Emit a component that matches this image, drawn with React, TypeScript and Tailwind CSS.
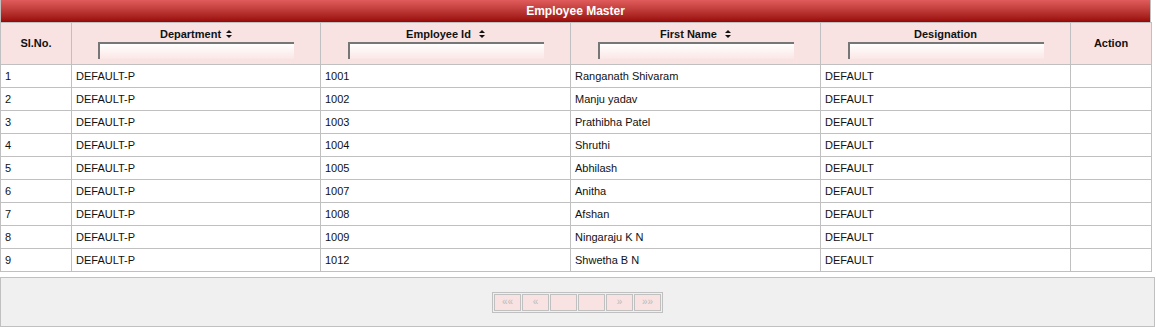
import React from 'react';

const rows = [
  { sl: 1, dept: 'DEFAULT-P', id: '1001', name: 'Ranganath Shivaram', desig: 'DEFAULT' },
  { sl: 2, dept: 'DEFAULT-P', id: '1002', name: 'Manju yadav', desig: 'DEFAULT' },
  { sl: 3, dept: 'DEFAULT-P', id: '1003', name: 'Prathibha Patel', desig: 'DEFAULT' },
  { sl: 4, dept: 'DEFAULT-P', id: '1004', name: 'Shruthi', desig: 'DEFAULT' },
  { sl: 5, dept: 'DEFAULT-P', id: '1005', name: 'Abhilash', desig: 'DEFAULT' },
  { sl: 6, dept: 'DEFAULT-P', id: '1007', name: 'Anitha', desig: 'DEFAULT' },
  { sl: 7, dept: 'DEFAULT-P', id: '1008', name: 'Afshan', desig: 'DEFAULT' },
  { sl: 8, dept: 'DEFAULT-P', id: '1009', name: 'Ningaraju K N', desig: 'DEFAULT' },
  { sl: 9, dept: 'DEFAULT-P', id: '1012', name: 'Shwetha B N', desig: 'DEFAULT' },
];

const SortIcon = () => (
  <svg width="6" height="8" viewBox="0 0 6 8" className="inline-block ml-[5px] align-[0px]">
    <polygon points="3,0 6,3 0,3" fill="#111" />
    <polygon points="0,5 6,5 3,8" fill="#111" />
  </svg>
);

const FilterInput = () => (
  <input
    type="text"
    className="block mx-auto mt-[1px] w-[196px] h-[17px] border-t-2 border-l-2 border-[#767676] bg-gradient-to-b from-white to-[#fbe6e6] outline-none"
  />
);

const pagerButtons = ['««', '«', '', '', '»', '»»'];

export default function App() {
  return (
    <div className="w-[1156px] h-[327px] bg-white font-['Liberation_Sans',Arial,sans-serif] text-[11px] text-[#111]">
      <div className="w-[1151px] border-l border-r border-[#c0c0c0]">
        <div className="h-[22px] bg-gradient-to-b from-[#e05c5c] to-[#980505] flex items-center justify-center text-white font-bold text-[12px]">
          Employee Master
        </div>
      </div>
      <table className="w-[1151px] border-collapse table-fixed">
        <colgroup>
          <col className="w-[71px]" />
          <col className="w-[249px]" />
          <col className="w-[250px]" />
          <col className="w-[250px]" />
          <col className="w-[250px]" />
          <col className="w-[81px]" />
        </colgroup>
        <thead>
          <tr className="h-[42px] bg-[#f8e3e2] text-[#111] font-bold leading-[13px]">
            <th className="border border-[#c0c0c0] align-middle p-0">Sl.No.</th>
            <th className="border border-[#c0c0c0] align-top pt-[5px] pb-0">
              Department<SortIcon />
              <FilterInput />
            </th>
            <th className="border border-[#c0c0c0] align-top pt-[5px] pb-0">
              Employee Id&nbsp;<SortIcon />
              <FilterInput />
            </th>
            <th className="border border-[#c0c0c0] align-top pt-[5px] pb-0">
              First Name&nbsp;<SortIcon />
              <FilterInput />
            </th>
            <th className="border border-[#c0c0c0] align-top pt-[5px] pb-0">
              Designation
              <FilterInput />
            </th>
            <th className="border border-[#c0c0c0] align-middle p-0">Action</th>
          </tr>
        </thead>
        <tbody>
          {rows.map(r => (
            <tr key={r.sl} className="h-[23px] leading-[13px]">
              <td className="border border-[#c0c0c0] px-[4px] py-0">{r.sl}</td>
              <td className="border border-[#c0c0c0] px-[4px] py-0">{r.dept}</td>
              <td className="border border-[#c0c0c0] px-[4px] py-0">{r.id}</td>
              <td className="border border-[#c0c0c0] px-[4px] py-0">{r.name}</td>
              <td className="border border-[#c0c0c0] px-[4px] py-0">{r.desig}</td>
              <td className="border border-[#c0c0c0] px-[4px] py-0"></td>
            </tr>
          ))}
        </tbody>
      </table>
      <div className="mt-[5px] w-[1155px] h-[50px] bg-[#f0f0f0] border border-[#c0c0c0] flex items-center justify-center">
        <div className="flex gap-[1px] border border-[#c0c0c0] p-[1px] bg-[#f0f0f0]">
          {pagerButtons.map((b, i) => (
            <div
              key={i}
              className="w-[27px] h-[17px] bg-[#f8e3e2] border border-[#c0c0c0] flex items-center justify-center text-[#bbb] text-[10px] leading-none"
            >
              {b}
            </div>
          ))}
        </div>
      </div>
    </div>
  );
}
